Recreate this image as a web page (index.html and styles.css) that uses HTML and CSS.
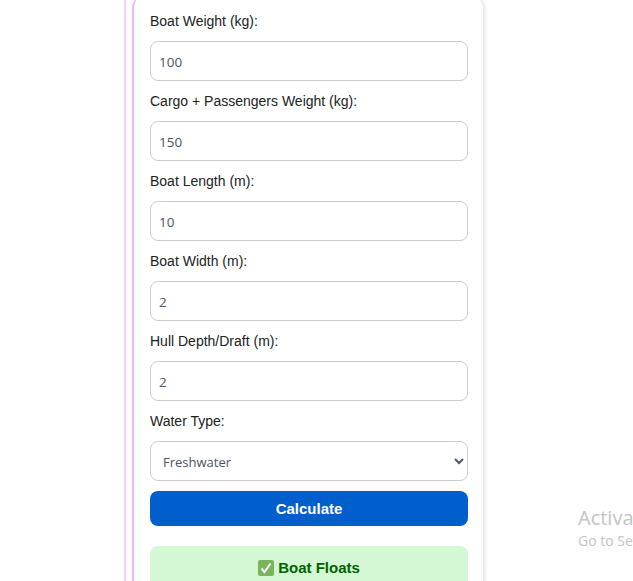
FILE: index.html
```html
<!DOCTYPE html>
<html lang="en">
<head>
<meta charset="utf-8">
<link rel="stylesheet" href="styles.css">
<title>Boat Buoyancy Calculator</title>
</head>
<body>
<div class="page">
  <div class="frame">
    <div class="card">
      <label class="lbl" for="weight">Boat Weight (kg):</label>
      <input class="field" id="weight" type="text" value="100">
      <label class="lbl" for="cargo">Cargo + Passengers Weight (kg):</label>
      <input class="field" id="cargo" type="text" value="150">
      <label class="lbl" for="length">Boat Length (m):</label>
      <input class="field" id="length" type="text" value="10">
      <label class="lbl" for="width">Boat Width (m):</label>
      <input class="field" id="width" type="text" value="2">
      <label class="lbl" for="draft">Hull Depth/Draft (m):</label>
      <input class="field" id="draft" type="text" value="2">
      <label class="lbl" for="water">Water Type:</label>
      <select class="field pick" id="water">
        <option>Freshwater</option>
        <option>Saltwater</option>
      </select>
      <button class="calc">Calculate</button>
      <div class="result">
        <svg class="tick" viewBox="0 0 16 16" width="16" height="16"><rect width="16" height="16" rx="2" fill="#7ab55c"/><path d="M3.5 8.5l3 3.5 6-8.5" fill="none" stroke="#fff" stroke-width="2"/></svg>
        <span>Boat Floats</span>
      </div>
    </div>
  </div>
</div>
<div class="activate">
  <div class="act1">Activate Windows</div>
  <div class="act2">Go to Settings to activate Windows.</div>
</div>
</body>
</html>
```

FILE: styles.css
```css
html, body {
  margin: 0;
  padding: 0;
  height: 581px;
  overflow: hidden;
  background: #fff;
  font-family: "Liberation Sans", Arial, sans-serif;
}
.page {
  margin-top: -4px;
  padding-left: 124px;
}
.frame {
  width: 357px;
  padding-left: 6px;
  border-left: 2px solid #f5cdfd;
}
.card {
  box-sizing: border-box;
  width: 351px;
  height: 700px;
  padding: 5px 15px 0 16px;
  background: #fff;
  border-radius: 12px;
  border-left: 2px solid #e8bcf0;
  box-shadow: 1px 0 5px rgba(0,0,0,0.15);
}
.lbl {
  display: block;
  height: 20px;
  padding: 10px 0;
  font-size: 14px;
  line-height: 20px;
  color: #222;
}
.field {
  display: block;
  box-sizing: border-box;
  width: 318px;
  height: 40px;
  padding: 2px 8px 0;
  background: #fff;
  border: 1px solid #ccc;
  border-radius: 8px;
  font-family: "Open Sans", sans-serif;
  font-size: 13.5px;
  color: #4a5568;
  outline: none;
}
.pick {
  font-size: 13px;
}
.calc {
  display: block;
  width: 318px;
  height: 35px;
  margin-top: 10px;
  background: #005fcc;
  border: 0;
  border-radius: 8px;
  font-family: "Liberation Sans", Arial, sans-serif;
  font-size: 15px;
  font-weight: bold;
  color: #fff;
}
.result {
  display: flex;
  justify-content: center;
  gap: 4px;
  box-sizing: border-box;
  width: 318px;
  height: 60px;
  margin-top: 20px;
  padding-top: 14px;
  background: #d4f8d4;
  border-radius: 8px;
  font-size: 15px;
  line-height: 16px;
  font-weight: bold;
  color: #006400;
}
.activate {
  position: absolute;
  left: 578px;
  top: 505px;
  width: 300px;
  font-family: "Open Sans", sans-serif;
  color: #c4c4c4;
}
.act1 {
  font-size: 20px;
  line-height: 26px;
}
.act2 {
  font-size: 14px;
  line-height: 20px;
}
```
